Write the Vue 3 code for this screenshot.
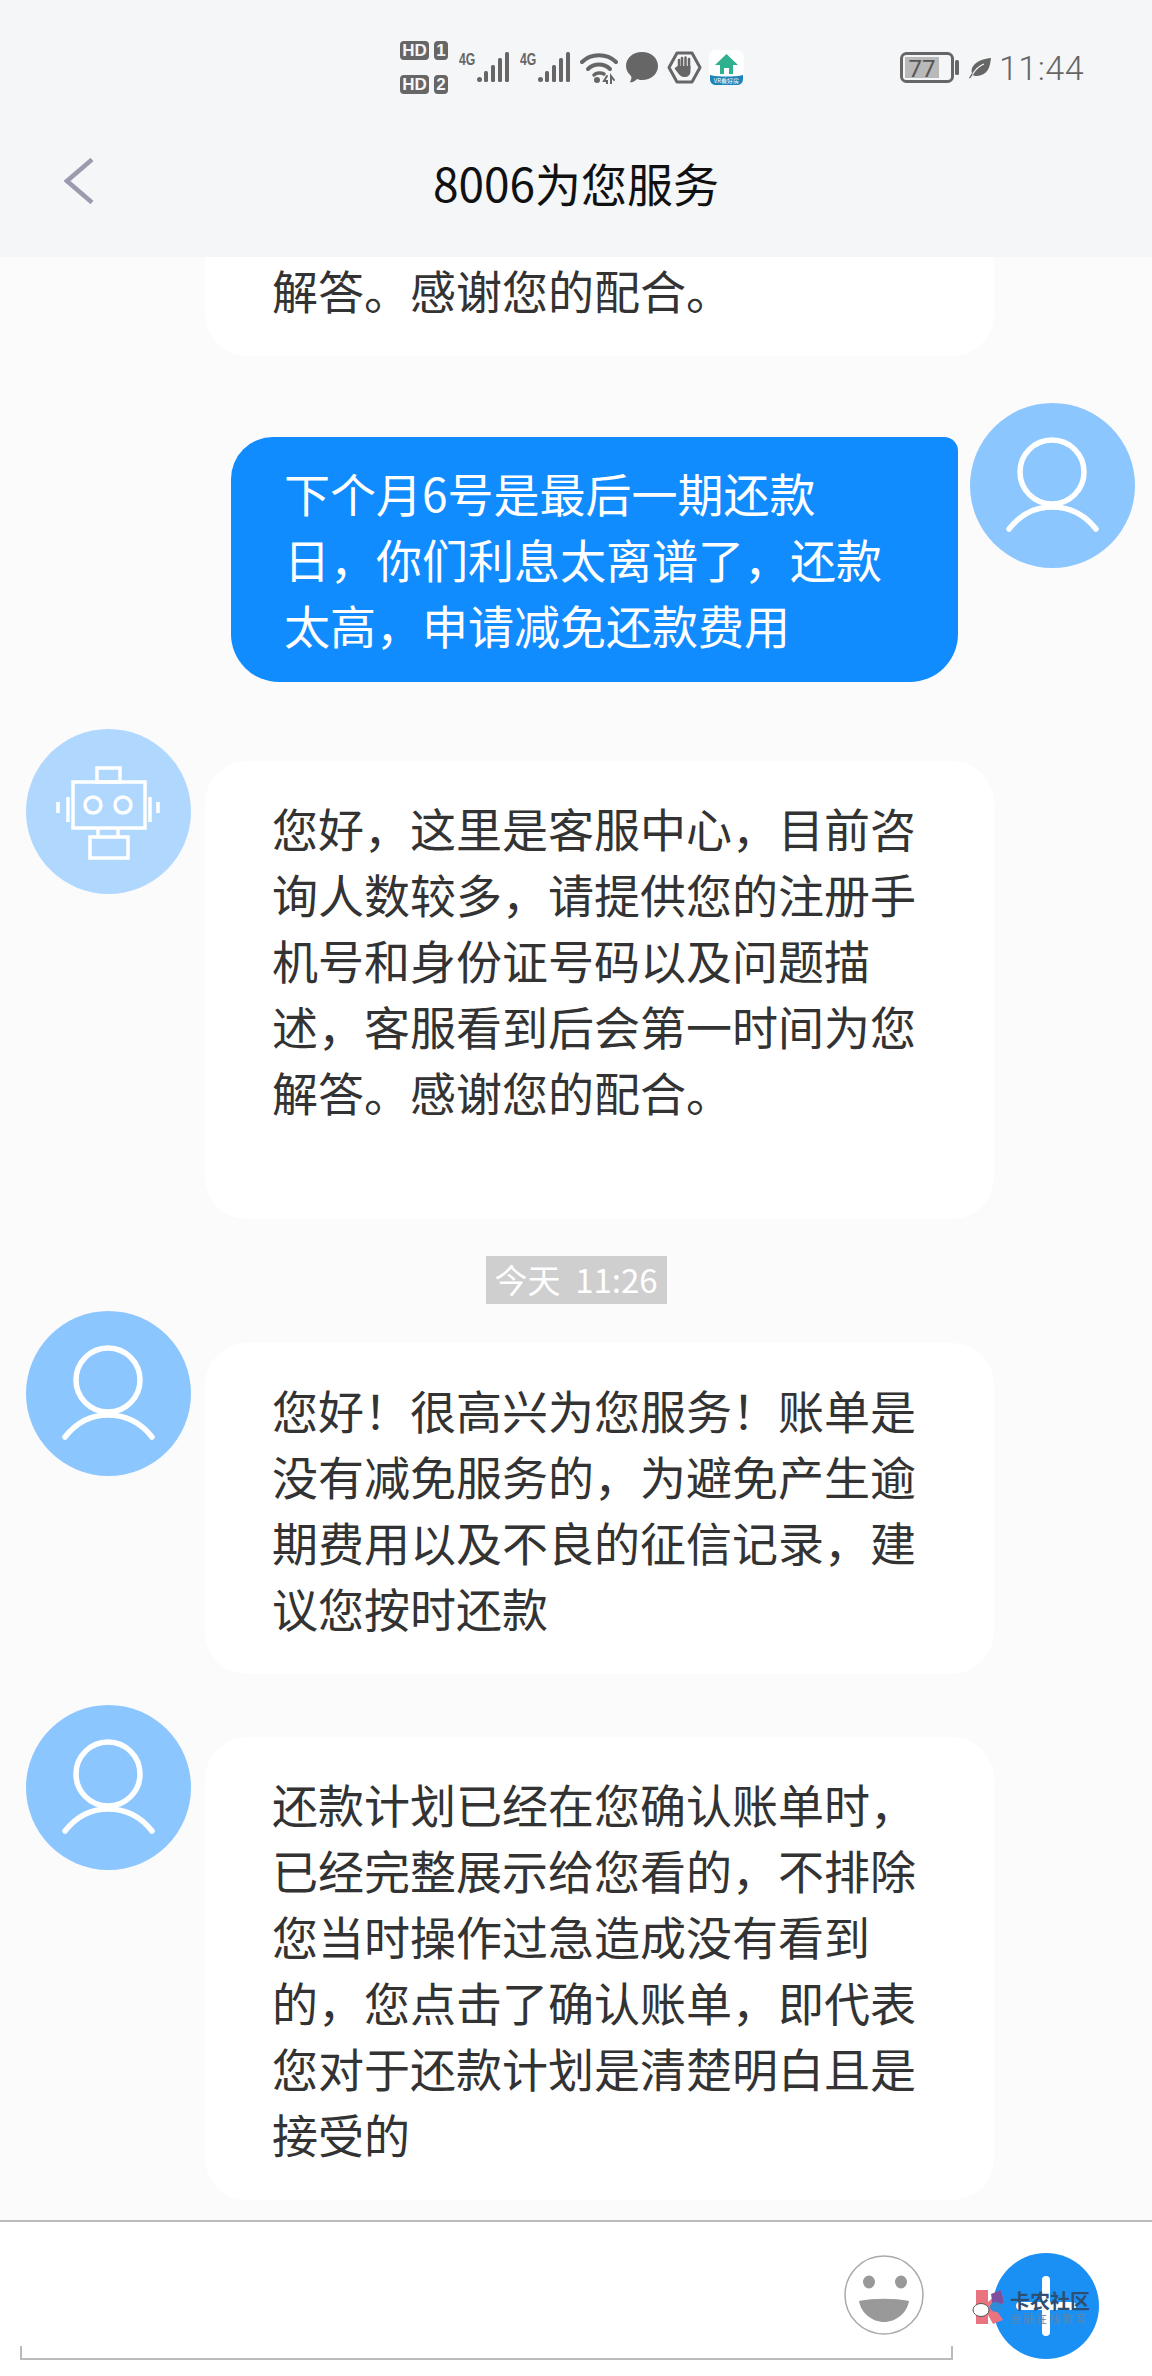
<template>
  <div class="page">
    <header class="top">
      <div class="status">
        <div class="hd-col">
          <div class="hd-row"><span class="hd">HD</span><span class="sim">1</span></div>
          <div class="hd-row"><span class="hd">HD</span><span class="sim">2</span></div>
        </div>
        <div v-for="n in 2" :key="n" class="net">
          <span class="g4">4G</span>
          <svg width="33" height="31" viewBox="0 0 33 31">
            <circle cx="2.5" cy="27.5" r="2.5" fill="#666" />
            <rect x="7" y="19" width="4" height="11" rx="1.5" fill="#666" />
            <rect x="14" y="13" width="4" height="17" rx="1.5" fill="#666" />
            <rect x="21" y="6" width="4" height="24" rx="1.5" fill="#666" />
            <rect x="28" y="0" width="4" height="30" rx="1.5" fill="#666" />
          </svg>
        </div>
        <svg class="wifi" width="38" height="32" viewBox="0 0 38 32" fill="none" stroke="#666" stroke-linecap="round">
          <path d="M2 10 C11 1 27 1 36 10" stroke-width="4" />
          <path d="M8 17 C14 11 24 11 30 17" stroke-width="4" />
          <path d="M14 23 C16 21 21 20 24 22" stroke-width="3.5" />
          <circle cx="17" cy="28" r="3" fill="#666" stroke="none" />
          <path d="M27 24 L24 29 H27 V32 M31 32 V24 L34 28" stroke-width="2" />
        </svg>
        <svg class="chat" width="32" height="31" viewBox="0 0 32 31">
          <path d="M16 0 C25 0 32 6 32 14 C32 22 25 28 16 28 C14 28 12 27.500 11 27 C9 29 6 31 4 30 C5 28 6 26 5 24 C2 21 0 18 0 14 C0 6 7 0 16 0 Z" fill="#666" />
        </svg>
        <svg class="hex" width="35" height="33" viewBox="0 0 35 33">
          <path d="M10 2 H25 L33 16.500 L25 31 H10 L2 16.500 Z" fill="none" stroke="#666" stroke-width="3" stroke-linejoin="round" />
          <path d="M12 9 V17 M15 7 V16 M18.500 6.500 V16 M22 8 V17" stroke="#666" stroke-width="2.500" stroke-linecap="round" />
          <path d="M10.500 15 H23.500 V20 C23.500 24 21 26 17.500 26 C14 26 12.500 24 11 22 L7.500 17.500 L9 16 Z" fill="#666" />
        </svg>
        <svg class="app" width="35" height="35" viewBox="0 0 35 35">
          <rect width="35" height="35" rx="7" fill="#fff" />
          <path d="M17.500 4 L29 15 H6 Z" fill="#2fb08f" />
          <rect x="11" y="15" width="13" height="9" fill="#2fb08f" />
          <rect x="15" y="18" width="5" height="6" fill="#fff" />
          <path d="M1 25 C8 27 27 27 34 25 V29 C34 33 31 35 28 35 H7 C4 35 1 33 1 29 Z" fill="#1b84b8" />
          <text x="17.500" y="33" text-anchor="middle" class="app-text">VR看好房</text>
        </svg>
        <div class="spacer"></div>
        <svg class="battery" width="60" height="32" viewBox="0 0 60 32">
          <rect x="1.500" y="1.500" width="51" height="28" rx="5" fill="none" stroke="#666" stroke-width="3" />
          <rect x="5" y="5" width="34" height="21" fill="#b9b9b9" />
          <rect x="55" y="8" width="4" height="15" rx="1.500" fill="#666" />
          <text x="22" y="25" text-anchor="middle" class="batt-text">77</text>
        </svg>
        <svg class="leaf" width="22" height="21" viewBox="0 0 22 21">
          <path d="M22 0 C21 9 19 17 8 18 C6 18 4.500 17.500 3.500 17 L1 20.500 L0 20 L3 15 C1 8 9 1 22 0 Z" fill="#666" />
          <path d="M3.500 16.500 C6 12 10 8 15 6" stroke="#f5f6f8" stroke-width="1.200" fill="none" />
        </svg>
        <span class="clock">11:44</span>
      </div>
      <div class="title-row">
        <svg class="back" width="30" height="46" viewBox="0 0 30 46">
          <path d="M28 1.500 L3 23 L28 44.500" fill="none" stroke="#9b9bb0" stroke-width="4.500" />
        </svg>
        <h1 class="title">8006为您服务</h1>
      </div>
    </header>

    <main class="list">
      <template v-for="(m, i) in messages" :key="i">
        <div v-if="m.time" class="time">{{ m.time }}</div>
        <div v-else class="row" :class="{ mine: m.mine, near: m.near, cut: m.cut }">
          <div class="avatar" :class="{ bot: m.bot }">
            <svg v-if="m.bot" width="165" height="165" viewBox="0 0 165 165" fill="none" stroke="#fff" stroke-width="3.500">
              <rect x="71" y="39" width="23" height="14" />
              <rect x="47" y="53" width="72" height="46" />
              <circle cx="67" cy="76" r="8" />
              <circle cx="97" cy="76" r="8" />
              <path d="M72 99 V108 M92 99 V108" />
              <rect x="64" y="108" width="38" height="21" />
              <path d="M42 68 V93 M32 73 V84 M124 68 V93 M132 73 V84" />
            </svg>
            <svg v-else width="165" height="165" viewBox="0 0 165 165" fill="none" stroke="#fff" stroke-width="5.500" stroke-linecap="round">
              <ellipse cx="82" cy="69" rx="32" ry="32" />
              <path d="M39 126 C50 112 64 104 82 104 C100 104 115 112 126 126" />
            </svg>
          </div>
          <div class="bubble" :class="{ tail: m.tail }">
            <div v-for="line in m.lines" :key="line" class="line">{{ line }}</div>
          </div>
        </div>
      </template>
    </main>

    <footer class="bottom">
      <div class="input-box">
        <svg class="smile" width="80" height="80" viewBox="0 0 80 80">
          <circle cx="40" cy="40" r="39" fill="#fff" stroke="#aaa" stroke-width="1.500" />
          <ellipse cx="25" cy="27" rx="6" ry="6.500" fill="#999" />
          <ellipse cx="57" cy="27" rx="6" ry="6.500" fill="#999" />
          <path d="M15 46 C30 43 50 43 65 46 C63 58 52 67 40 67 C28 67 17 58 15 46 Z" fill="#999" />
        </svg>
        <div class="input-line"></div>
      </div>
      <div class="plus">
        <span class="bar-v"></span>
        <span class="bar-h"></span>
      </div>
      <div class="mark">
        <svg width="36" height="36" viewBox="0 0 36 36">
          <path d="M5 1 H17 V35 H5 Z" fill="#ea7380" />
          <path d="M17 13 L30 1 L33 14 L24 19 L32 31 L22 35 L17 26 Z" fill="#ea7380" />
          <path d="M20 5 L30 1 L33 14 L22 18 Z" fill="#7d4f9e" />
          <ellipse cx="10" cy="21" rx="8" ry="6.500" fill="#fff" stroke="#555" stroke-width="1" />
          <ellipse cx="25" cy="18" rx="6" ry="5" fill="#2b8ddb" />
        </svg>
        <div class="mark-text">
          <span class="mark-name">卡农社区</span>
          <span class="mark-sub">金融在线教育</span>
        </div>
      </div>
    </footer>
  </div>
</template>

<script setup>
// full-width punctuation, written as escapes so it stays full-width
const c = '\uFF0C'
const ex = '\uFF01'

const messages = [
  { bot: true, cut: true, lines: ['解答。感谢您的配合。'] },
  {
    mine: true,
    lines: [`下个月6号是最后一期还款`, `日${c}你们利息太离谱了${c}还款`, `太高${c}申请减免还款费用`],
  },
  {
    bot: true,
    tail: true,
    lines: [
      `您好${c}这里是客服中心${c}目前咨`,
      `询人数较多${c}请提供您的注册手`,
      `机号和身份证号码以及问题描`,
      `述${c}客服看到后会第一时间为您`,
      `解答。感谢您的配合。`,
    ],
  },
  { time: '今天  11:26' },
  {
    lines: [
      `您好${ex}很高兴为您服务${ex}账单是`,
      `没有减免服务的${c}为避免产生逾`,
      `期费用以及不良的征信记录${c}建`,
      `议您按时还款`,
    ],
  },
  {
    near: true,
    lines: [
      `还款计划已经在您确认账单时${c}`,
      `已经完整展示给您看的${c}不排除`,
      `您当时操作过急造成没有看到`,
      `的${c}您点击了确认账单${c}即代表`,
      `您对于还款计划是清楚明白且是`,
      `接受的`,
    ],
  },
]
</script>

<style>
html,
body {
  margin: 0;
  background: #fbfbfb;
}
</style>

<style scoped>
.page {
  width: 1152px;
  height: 2376px;
  display: flex;
  flex-direction: column;
  overflow: hidden;
  font-family: "Noto Sans CJK SC", "Noto Sans", sans-serif;
  color: #333;
}

.top {
  height: 257px;
  flex-shrink: 0;
  background: #f5f6f8;
  position: relative;
  z-index: 1;
}

.status {
  height: 102px;
  box-sizing: border-box;
  padding: 41px 68px 0 400px;
  display: flex;
  align-items: flex-start;
  color: #666;
}

.hd-col {
  width: 48px;
  display: flex;
  flex-direction: column;
  gap: 15px;
}

.hd-row {
  display: flex;
  justify-content: space-between;
}

.hd,
.sim {
  height: 19px;
  background: #666;
  color: #f5f6f8;
  border-radius: 4px;
  font-family: "Liberation Sans", sans-serif;
  font-size: 17px;
  font-weight: 700;
  line-height: 19px;
  text-align: center;
}

.hd {
  width: 29px;
}

.sim {
  width: 14px;
}

.net {
  width: 51px;
  margin: 11px 0 0 11px;
  display: flex;
  align-items: flex-start;
  flex-shrink: 0;
}

.net + .net {
  margin-left: 10px;
}

.g4 {
  width: 18px;
  font-family: "Liberation Sans", sans-serif;
  font-size: 17px;
  font-weight: 700;
  line-height: 15px;
  transform: scaleX(0.72);
  transform-origin: left top;
  flex-shrink: 0;
  white-space: nowrap;
}

.net svg {
  flex-shrink: 0;
}

.wifi {
  margin: 11px 0 0 9px;
}

.chat {
  margin: 11px 0 0 8px;
}

.hex {
  margin: 10px 0 0 9px;
}

.app {
  margin: 9px 0 0 7px;
}

.app-text {
  font-size: 6px;
  fill: #fff;
}

.spacer {
  flex: 1;
}

.battery {
  margin-top: 11px;
}

.batt-text {
  font-family: "Roboto", sans-serif;
  font-size: 24px;
  fill: #555;
}

.leaf {
  margin: 17px 0 0 9px;
}

.clock {
  margin: 7px 0 0 8px;
  font-family: "Roboto", sans-serif;
  font-size: 34px;
  font-weight: 300;
  line-height: 40px;
  letter-spacing: 0.5px;
}

.title-row {
  height: 100px;
  position: relative;
  display: flex;
  justify-content: center;
  align-items: flex-start;
}

.back {
  position: absolute;
  left: 64px;
  top: 56px;
}

.title {
  margin: 50px 0 0;
  font-size: 46px;
  font-weight: 400;
  line-height: 60px;
  color: #111;
}

.list {
  flex: 1;
  min-height: 0;
  overflow: hidden;
  display: flex;
  flex-direction: column;
  justify-content: flex-end;
  padding-bottom: 20px;
  background: #fbfbfb;
}

.row {
  flex-shrink: 0;
  display: flex;
  align-items: flex-start;
  margin-top: 47px;
  padding-left: 26px;
}

.row.near {
  margin-top: 31px;
}

.row.cut .avatar {
  visibility: hidden;
}

.avatar {
  width: 165px;
  height: 165px;
  flex-shrink: 0;
  border-radius: 50%;
  background: #8cc6ff;
}

.avatar svg {
  display: block;
}

.avatar.bot {
  background: #b0d8ff;
}

.bubble {
  width: 789px;
  box-sizing: border-box;
  margin: 32px 0 0 14px;
  padding: 33px 20px 34px 67px;
  background: #fff;
  border-radius: 42px;
  font-size: 46px;
  line-height: 66px;
  color: #333;
}

.bubble.tail {
  padding-bottom: 95px;
}

.line {
  white-space: nowrap;
}

.row.mine {
  flex-direction: row-reverse;
  padding: 0 17px 0 0;
}

.row.mine .bubble {
  width: 727px;
  margin: 34px 12px 0 0;
  padding: 22px 20px 25px 53px;
  background: #118cff;
  color: #fff;
  border-radius: 42px 14px 48px 48px;
}

.time {
  flex-shrink: 0;
  align-self: center;
  width: 181px;
  height: 48px;
  margin: 37px 0 7px;
  background: #cfcfcf;
  color: #fff;
  font-size: 33px;
  line-height: 46px;
  text-align: center;
  white-space: pre;
}

.time + .row {
  margin-top: 0;
}

.bottom {
  height: 156px;
  flex-shrink: 0;
  box-sizing: border-box;
  border-top: 2px solid #bbb;
  background: #fff;
  display: flex;
  align-items: flex-start;
  position: relative;
}

.input-box {
  width: 933px;
  margin: 33px 0 0 20px;
  display: flex;
  flex-direction: column;
  flex-shrink: 0;
}

.smile {
  display: block;
  align-self: flex-end;
  margin-right: 29px;
}

.input-line {
  height: 14px;
  margin-top: 11px;
  box-sizing: border-box;
  border: 2px solid #bbb;
  border-top: 0;
}

.plus {
  width: 106px;
  height: 106px;
  margin: 31px 0 0 40px;
  border-radius: 50%;
  background: #1a90f5;
  position: relative;
  flex-shrink: 0;
}

.bar-v {
  position: absolute;
  left: 49px;
  top: 23px;
  width: 8px;
  height: 60px;
  border-radius: 4px;
  background: #fff;
}

.bar-h {
  position: absolute;
  left: 23px;
  top: 49px;
  width: 60px;
  height: 8px;
  border-radius: 4px;
  background: #fff;
}

.mark {
  position: absolute;
  left: 971px;
  top: 67px;
  display: flex;
  align-items: flex-start;
  gap: 3px;
}

.mark svg {
  display: block;
}

.mark-text {
  display: flex;
  flex-direction: column;
  padding-top: 2px;
}

.mark-name {
  font-size: 20px;
  font-weight: 700;
  line-height: 20px;
  color: #2f4f72;
  white-space: nowrap;
}

.mark-sub {
  margin-top: 1px;
  font-size: 11px;
  line-height: 13px;
  letter-spacing: 2px;
  color: #5c86ad;
  white-space: nowrap;
}
</style>
